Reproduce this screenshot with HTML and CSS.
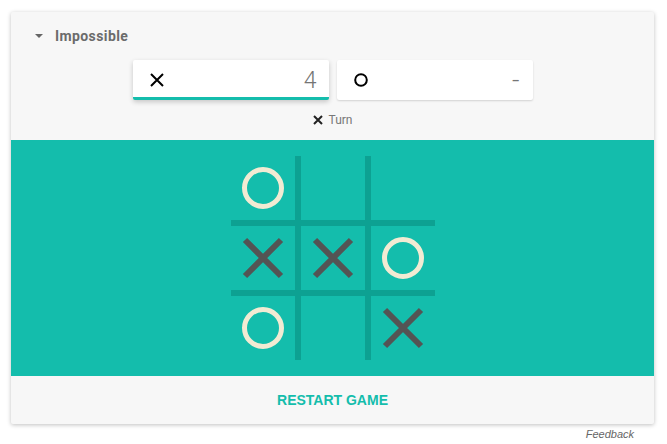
FILE: index.html
```html
<!DOCTYPE html>
<html>
<head>
    <title>Tic Tac Toe</title>
    <link rel="stylesheet" href="styles.css">
</head>
<body>
    <div class="card">
        <div class="header">
            <div class="level">
                <span class="caret"></span>
                <span class="level-name">Impossible</span>
            </div>
            <div class="scores">
                <div class="score active">
                    <svg class="mark" width="14" height="14" viewBox="0 0 14 14">
                        <path d="M1 1L13 13M13 1L1 13" stroke="#000" stroke-width="2"/>
                    </svg>
                    <span class="num">4</span>
                </div>
                <div class="score">
                    <svg class="mark" width="14" height="14" viewBox="0 0 14 14">
                        <circle cx="7" cy="7" r="5.8" fill="none" stroke="#000" stroke-width="2"/>
                    </svg>
                    <span class="num dash">-</span>
                </div>
            </div>
            <div class="turn">
                <svg width="10" height="10" viewBox="0 0 10 10">
                    <path d="M1 1L9 9M9 1L1 9" stroke="#222" stroke-width="2"/>
                </svg>
                <span>Turn</span>
            </div>
        </div>

        <div class="board-wrap">
            <div class="board">
                <div class="cell"><svg viewBox="0 0 64 64"><circle class="o" cx="32" cy="32" r="18.5"/></svg></div>
                <div class="cell"></div>
                <div class="cell"></div>
                <div class="cell"><svg viewBox="0 0 64 64"><path class="x" d="M14 14L50 50M50 14L14 50"/></svg></div>
                <div class="cell"><svg viewBox="0 0 64 64"><path class="x" d="M14 14L50 50M50 14L14 50"/></svg></div>
                <div class="cell"><svg viewBox="0 0 64 64"><circle class="o" cx="32" cy="32" r="18.5"/></svg></div>
                <div class="cell"><svg viewBox="0 0 64 64"><circle class="o" cx="32" cy="32" r="18.5"/></svg></div>
                <div class="cell"></div>
                <div class="cell"><svg viewBox="0 0 64 64"><path class="x" d="M14 14L50 50M50 14L14 50"/></svg></div>
            </div>
        </div>

        <div class="footer">
            <button class="restart">RESTART GAME</button>
        </div>
    </div>
    <div class="feedback">Feedback</div>
</body>
</html>
```

FILE: styles.css
```css
body {
    margin: 0;
    padding: 12px 13px 0 11px;
    background-color: #fff;
    font-family: Roboto, "Liberation Sans", Arial, sans-serif;
}

.card {
    background-color: #f7f7f7;
    border-radius: 2px;
    box-shadow: 0 1px 4px rgba(0, 0, 0, 0.25);
    overflow: hidden;
}

.header {
    padding: 12px 24px 12px 24px;
}

.level {
    display: flex;
    align-items: center;
    height: 24px;
}

.caret {
    width: 0;
    height: 0;
    border-left: 4px solid transparent;
    border-right: 4px solid transparent;
    border-top: 4px solid #666;
    margin-right: 12px;
}

.level-name {
    font-size: 14px;
    font-weight: bold;
    letter-spacing: 0.4px;
    color: #6b6b6b;
}

.scores {
    display: flex;
    justify-content: center;
    gap: 8px;
    margin-top: 12px;
}

.score {
    box-sizing: border-box;
    width: 196px;
    height: 40px;
    display: flex;
    align-items: center;
    justify-content: space-between;
    padding: 0 12px 0 17px;
    background-color: #fff;
    border-radius: 2px;
    box-shadow: 0 1px 2px rgba(0, 0, 0, 0.15);
}

.score.active {
    border-bottom: 3px solid #14bdac;
    padding-top: 3px;
    box-shadow: 0 2px 5px rgba(0, 0, 0, 0.2);
}

.num {
    font-size: 23px;
    font-weight: 300;
    color: #757575;
}

.num.dash {
    font-size: 26px;
    padding-right: 1px;
}

.turn {
    display: flex;
    justify-content: center;
    align-items: center;
    gap: 6px;
    height: 16px;
    margin-top: 12px;
    font-size: 12px;
    color: #777;
}

.board-wrap {
    background-color: #14bdac;
    display: flex;
    justify-content: center;
    padding: 16px 0;
}

.board {
    display: grid;
    grid-template-columns: repeat(3, 64px);
    grid-template-rows: repeat(3, 64px);
    gap: 6px;
    background-color: #0da192;
}

.cell {
    background-color: #14bdac;
}

.cell svg {
    display: block;
    width: 64px;
    height: 64px;
}

.o {
    fill: none;
    stroke: #f2ebd3;
    stroke-width: 5;
}

.x {
    stroke: #545454;
    stroke-width: 6;
}

.footer {
    height: 48px;
    display: flex;
    justify-content: center;
    align-items: center;
}

.restart {
    background: none;
    border: none;
    font-family: "Liberation Sans", Arial, sans-serif;
    font-size: 14px;
    font-weight: bold;
    color: #14bdac;
    cursor: pointer;
    padding: 0;
}

.feedback {
    text-align: right;
    padding-right: 20px;
    margin-top: 4px;
    font-family: "Liberation Sans", Arial, sans-serif;
    font-size: 11px;
    font-style: italic;
    color: #666;
}
```
